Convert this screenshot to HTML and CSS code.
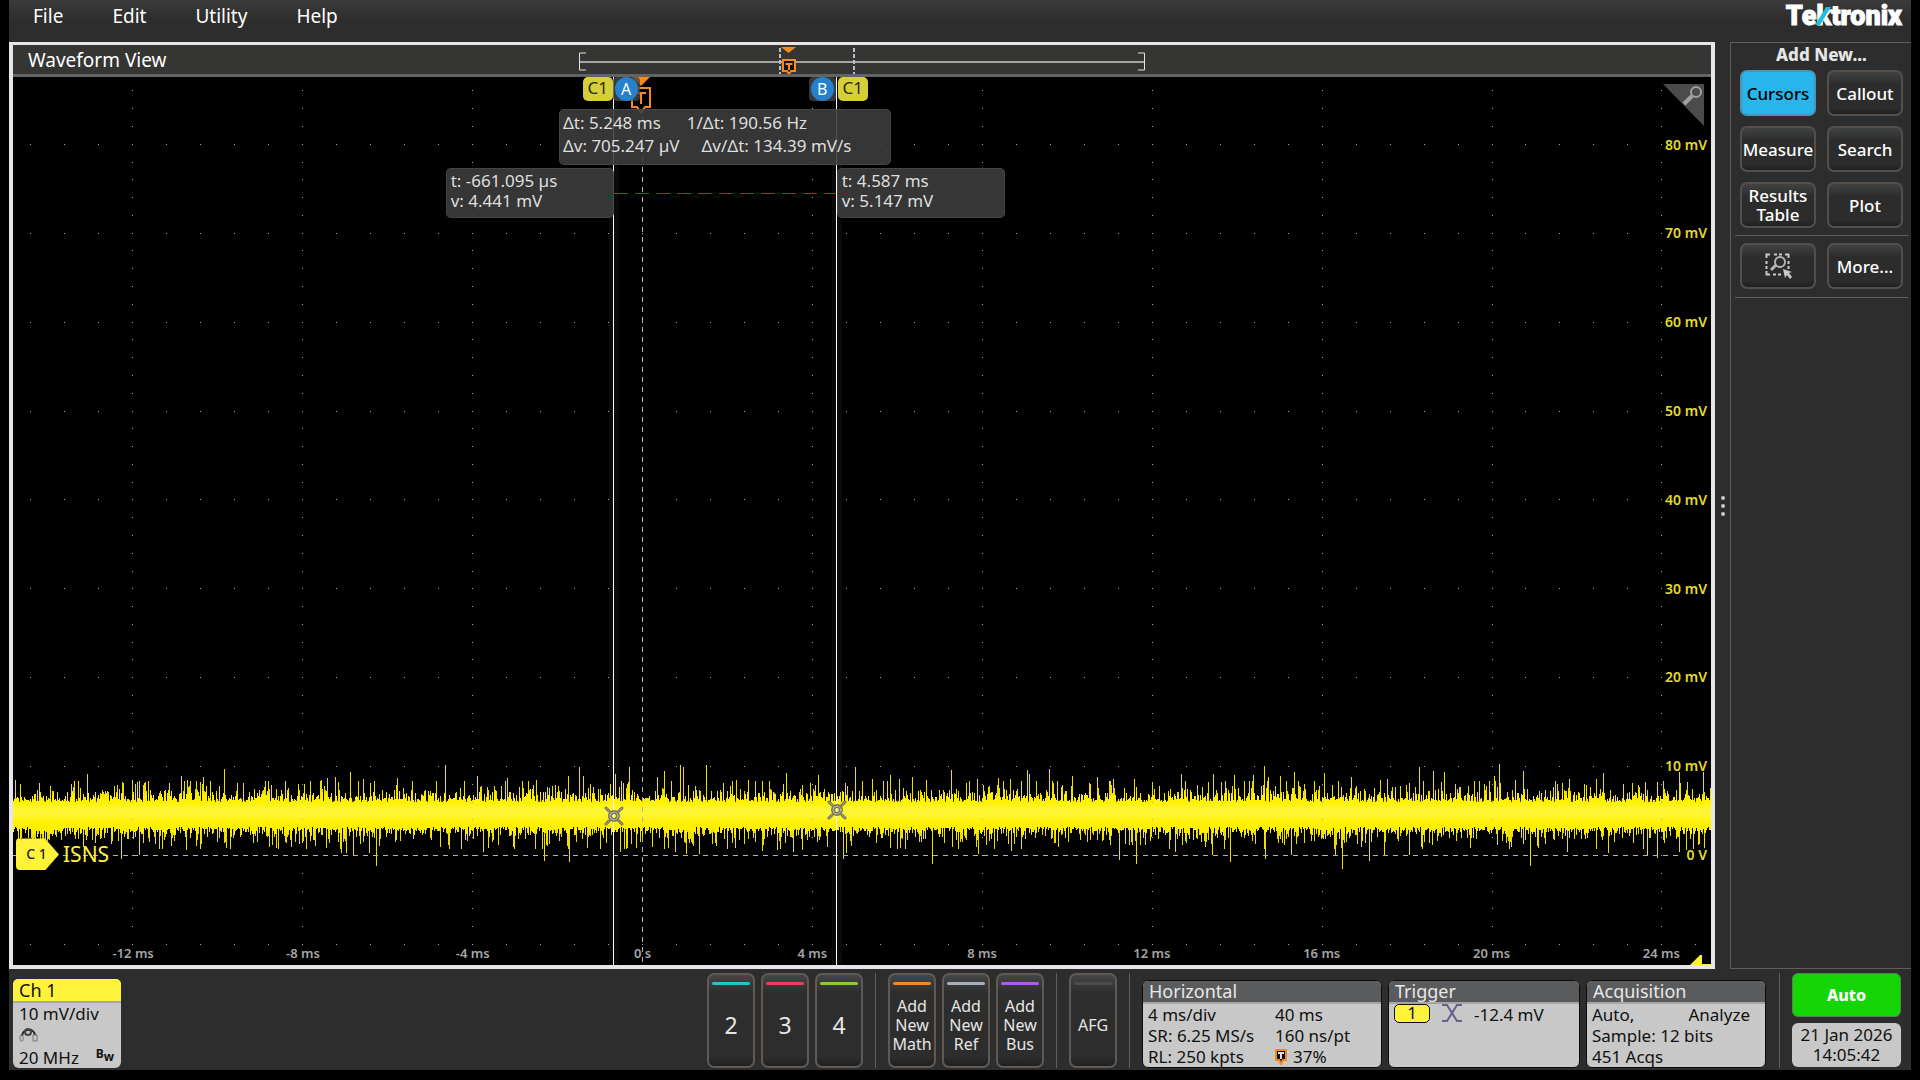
FILE: index.html
```html
<!DOCTYPE html>
<html lang="en">
<head>
<meta charset="utf-8">
<title>Waveform View</title>
<link rel="stylesheet" href="styles.css">
</head>
<body>
<div class="scope">
  <header class="topbar">
    <nav class="menu">
      <button type="button">File</button>
      <button type="button">Edit</button>
      <button type="button">Utility</button>
      <button type="button">Help</button>
    </nav>
    <div class="logo">Te<span class="logo-k">k<svg viewBox="0 0 16 18" aria-hidden="true"><path d="M0 18 11 0H16L5 18Z" fill="#1ebfe0"/></svg></span>tronix</div>
  </header>

  <main class="workspace">
    <section class="view">
      <div class="view-head">
        <h1>Waveform View</h1>
        <svg class="navigator" viewBox="0 0 568 29" aria-hidden="true">
          <path d="M8 8H1.500V25H8M560 8H566.500V25H560" fill="none" stroke="#e4e4e4"/>
          <path d="M2 17H566" stroke="#a4a4a2" stroke-width="2"/>
          <path d="M202 3V29M276 3V29" stroke="#bdbdbd" stroke-width="2" stroke-dasharray="4 2"/>
          <path d="M203 2H218L210.500 8Z" fill="#f68a1f"/>
          <path d="M205 15H217V26H213L211 29 209 26H205Z" fill="#111" stroke="#f68a1f" stroke-width="2"/>
          <path d="M207.500 19H214.500M211 19V25" stroke="#f68a1f" stroke-width="2"/>
        </svg>
      </div>
      <div class="plot">
        <svg class="trace" viewBox="0 0 1698 888" preserveAspectRatio="none" aria-hidden="true">
          <defs>
            <linearGradient id="core" x1="0" y1="0" x2="0" y2="1">
              <stop offset="0" stop-color="#fff200" stop-opacity="0"/>
              <stop offset=".35" stop-color="#fff633"/>
              <stop offset=".65" stop-color="#fff633"/>
              <stop offset="1" stop-color="#fff200" stop-opacity="0"/>
            </linearGradient>
          </defs>
          <path id="spikes" stroke="#eadf00" fill="none"/>
          <path id="band" stroke="#fff000" fill="none"/>
          <rect x="0" y="722" width="1698" height="26" fill="url(#core)"/>
          <path id="dots" fill="#a8a8a8"/>
          <path d="M0 778.500H1668" stroke="#b4b4b4" stroke-dasharray="5 5"/>
          <path d="M629.500 0V888" stroke="#b4b4b4" stroke-dasharray="5 5"/>
          <path d="M601 116.500H823" stroke="#e80c0c" stroke-dasharray="14 7"/>
        </svg>

        <svg class="trigger-mark" viewBox="0 0 20 37" aria-hidden="true">
          <path d="M1 0H19L10 9Z" fill="#f68a1f"/>
          <path d="M1 11H19V30H14L10 36 6 30H1Z" fill="#000" stroke="#f68a1f" stroke-width="2"/>
          <path d="M5 16H15M10 16V27" stroke="#f68a1f" stroke-width="2"/>
        </svg>

        <div class="cursor" style="--t:-0.68"></div>
        <div class="cursor" style="--t:4.575"></div>
        <div class="flags flags-a" style="--t:-0.68"><span class="src">C1</span><span class="knob"><b>A</b></span></div>
        <div class="flags flags-b" style="--t:4.575"><span class="knob"><b>B</b></span><span class="src">C1</span></div>

        <div class="readout delta">
          <p class="wide"><span>Δt: 5.248 ms</span><span>1/Δt: 190.56 Hz</span></p>
          <p><span>Δv: 705.247 µV</span><span>Δv/Δt: 134.39 mV/s</span></p>
        </div>
        <div class="readout point point-a" style="--t:-0.68"><p>t: -661.095 µs</p><p>v: 4.441 mV</p></div>
        <div class="readout point point-b" style="--t:4.575"><p>t: 4.587 ms</p><p>v: 5.147 mV</p></div>

        <svg class="target" style="--t:-0.68;--v:4.441" viewBox="0 0 20 20" aria-hidden="true"><g fill="none" stroke-linecap="round"><path d="M2 2 5 5M18 2 15 5M2 18 5 15M18 18 15 15" stroke="#77745a" stroke-width="3"/><circle cx="10" cy="10" r="4" stroke="#77745a" stroke-width="4"/><path d="M2 2 5 5M18 2 15 5M2 18 5 15M18 18 15 15" stroke="#aaa896"/><circle cx="10" cy="10" r="4" stroke="#c4c2b0" stroke-width="1"/></g></svg>
        <svg class="target" style="--t:4.575;--v:5.147" viewBox="0 0 20 20" aria-hidden="true"><g fill="none" stroke-linecap="round"><path d="M2 2 5 5M18 2 15 5M2 18 5 15M18 18 15 15" stroke="#77745a" stroke-width="3"/><circle cx="10" cy="10" r="4" stroke="#77745a" stroke-width="4"/><path d="M2 2 5 5M18 2 15 5M2 18 5 15M18 18 15 15" stroke="#aaa896"/><circle cx="10" cy="10" r="4" stroke="#c4c2b0" stroke-width="1"/></g></svg>

        <span class="volt" style="--v:80">80 mV</span>
        <span class="volt" style="--v:70">70 mV</span>
        <span class="volt" style="--v:60">60 mV</span>
        <span class="volt" style="--v:50">50 mV</span>
        <span class="volt" style="--v:40">40 mV</span>
        <span class="volt" style="--v:30">30 mV</span>
        <span class="volt" style="--v:20">20 mV</span>
        <span class="volt" style="--v:10">10 mV</span>
        <span class="volt" style="--v:0">0 V</span>

        <span class="time" style="--t:-12">-12 ms</span>
        <span class="time" style="--t:-8">-8 ms</span>
        <span class="time" style="--t:-4">-4 ms</span>
        <span class="time" style="--t:0">0 s</span>
        <span class="time" style="--t:4">4 ms</span>
        <span class="time" style="--t:8">8 ms</span>
        <span class="time" style="--t:12">12 ms</span>
        <span class="time" style="--t:16">16 ms</span>
        <span class="time" style="--t:20">20 ms</span>
        <span class="time" style="--t:24">24 ms</span>

        <div class="channel-tag" style="--v:0"><span class="handle">C 1</span><span class="name">ISNS</span></div>

        <svg class="zoom-corner" viewBox="0 0 42 42" aria-hidden="true">
          <path d="M0 0H41V42Z" fill="#4b4b4b"/>
          <circle cx="33" cy="8" r="5" fill="none" stroke="#a0a0a0" stroke-width="2"/>
          <path d="M29 12 21 20" stroke="#a0a0a0" stroke-width="4"/>
        </svg>
        <svg class="level-corner" viewBox="0 0 21 10" aria-hidden="true"><path d="M0 10 10 0H12V9H21V10Z" fill="#fff22d"/></svg>
      </div>
    </section>

    <div class="splitter"><i></i><i></i><i></i></div>

    <aside class="panel">
      <h2>Add New...</h2>
      <div class="tools">
        <button type="button" class="tool active">Cursors</button>
        <button type="button" class="tool">Callout</button>
        <button type="button" class="tool">Measure</button>
        <button type="button" class="tool">Search</button>
        <button type="button" class="tool">Results Table</button>
        <button type="button" class="tool">Plot</button>
      </div>
      <div class="tools more">
        <button type="button" class="tool" aria-label="Zoom area">
          <svg viewBox="0 0 27 26" width="27" height="26" aria-hidden="true">
            <path d="M1.500 5V1.500H5M20 1.500H23.500V5M1.500 18V21.500H5M9 1.500H12M14 1.500H17M1.500 8V11M1.500 13V16M23.500 8V11M23.500 13V16M8 21.500H11M13 21.500H16" fill="none" stroke="#c8c8c8" stroke-width="2"/>
            <circle cx="15" cy="9" r="5" fill="none" stroke="#b4b4b4" stroke-width="2"/>
            <path d="M11 12 6 17" stroke="#b4b4b4" stroke-width="3"/>
            <path d="M18 16 27 19 24 20 27 24 25 26 22 22 20 25Z" fill="#c8c8c8"/>
          </svg>
        </button>
        <button type="button" class="tool">More...</button>
      </div>
    </aside>
  </main>

  <footer class="settings">
    <button type="button" class="card channel">
      <span class="card-head">Ch 1</span>
      <span class="card-body">
        <span>10 mV/div</span>
        <svg viewBox="0 0 20 16" width="20" height="16" aria-hidden="true"><g fill="none"><path d="M3 9C4 1 15 1 16 8" stroke="#222" stroke-width="2"/><circle cx="9" cy="5" r="3" stroke="#444" stroke-width="2"/><rect x="1" y="8" width="3" height="6" rx="1" stroke="#777"/><rect x="14" y="8" width="4" height="6" stroke="#777"/></g></svg>
        <span class="bandwidth">20 MHz <b>B<sub>w</sub></b></span>
      </span>
    </button>

    <div class="adders">
      <button type="button" class="adder big cyan">2</button>
      <button type="button" class="adder big red">3</button>
      <button type="button" class="adder big green">4</button>
    </div>
    <div class="adders">
      <button type="button" class="adder orange">Add New Math</button>
      <button type="button" class="adder silver">Add New Ref</button>
      <button type="button" class="adder purple">Add New Bus</button>
    </div>
    <div class="adders">
      <button type="button" class="adder gray">AFG</button>
    </div>

    <div class="cards">
      <button type="button" class="card horizontal">
        <span class="card-head">Horizontal</span>
        <span class="card-body">
          <span>4 ms/div</span><span>40 ms</span>
          <span>SR: 6.25 MS/s</span><span>160 ns/pt</span>
          <span>RL: 250 kpts</span>
          <span class="position"><svg viewBox="0 0 12 16" width="12" height="16" aria-hidden="true"><path d="M1 1H11V11H8L6 15 4 11H1Z" fill="#111" stroke="#f68a1f" stroke-width="2"/><path d="M3 4H9M6 4V10" stroke="#ddd" stroke-width="2"/></svg>37%</span>
        </span>
      </button>
      <button type="button" class="card trigger">
        <span class="card-head">Trigger</span>
        <span class="card-body">
          <span class="source">1</span>
          <svg viewBox="0 0 20 18" width="20" height="18" aria-hidden="true"><path d="M0 1H5L15 17H20M0 17H5L15 1H20" fill="none" stroke="#66608f" stroke-width="2"/></svg>
          <span>-12.4 mV</span>
        </span>
      </button>
      <button type="button" class="card acquisition">
        <span class="card-head">Acquisition</span>
        <span class="card-body">
          <span class="mode"><span>Auto,</span><span>Analyze</span></span>
          <span>Sample: 12 bits</span>
          <span>451 Acqs</span>
        </span>
      </button>
    </div>

    <div class="status">
      <button type="button" class="run">Auto</button>
      <button type="button" class="clock">21 Jan 2026<br>14:05:42</button>
    </div>
  </footer>
</div>
<script src="trace.js"></script>
</body>
</html>
```
FILE: styles.css
```css
* { box-sizing: border-box; }

body {
  margin: 0;
  background: #000;
  color: #fff;
  font-family: "Noto Sans", "Open Sans", sans-serif;
  font-size: 17px;
}

h1, h2, p { margin: 0; }

button {
  margin: 0;
  padding: 0;
  border: 0;
  background: none;
  color: inherit;
  font: inherit;
}

.scope {
  display: grid;
  grid-template-rows: 42px 1fr 101px;
  height: calc(100vh - 10px);
  min-height: 560px;
  margin: 0 9px 10px;
  background: #2d2d2d;
}

/* Top bar */
.topbar {
  display: flex;
  justify-content: space-between;
  align-items: flex-start;
  padding: 0 9px 0 24px;
  background: linear-gradient(#3b3b3b, #2d2d2d 20px);
}
.menu {
  display: flex;
  gap: 49px;
  font-size: 19px;
  line-height: 32px;
}
.logo {
  font: 900 27px/32px Roboto, "Liberation Sans", sans-serif;
  -webkit-text-stroke: 1px #fff;
}
.logo-k { position: relative; }
.logo-k svg {
  position: absolute;
  left: -1px;
  bottom: 7px;
  width: 16px;
  height: 18px;
}

/* Workspace */
.workspace {
  display: flex;
  min-height: 0;
}
.view {
  flex: 1;
  display: flex;
  flex-direction: column;
  min-width: 0;
  border: 4px solid #e7e4ea;
  border-top-width: 3px;
}
.view-head {
  position: relative;
  display: flex;
  align-items: center;
  flex: none;
  height: 32px;
  padding-left: 15px;
  background: #353533;
  border-bottom: 3px solid #626464;
}
.view-head h1 {
  font-size: 19px;
  font-weight: 400;
}
.navigator {
  position: absolute;
  left: 33.300%;
  top: 0;
  width: 568px;
  height: 29px;
}
.plot {
  position: relative;
  flex: 1;
  overflow: hidden;
  background: #000;
}
.trace {
  position: absolute;
  inset: 0;
  width: 100%;
  height: 100%;
}

/* Items on the plot: --t is in ms over a 40 ms span, --v in mV over 100 mV */
.cursor, .flags, .point, .target, .time {
  position: absolute;
  left: calc((var(--t) + 14.83) * 2.5%);
}
.cursor {
  top: 0;
  bottom: 0;
  width: 10px;
  margin-left: -5px;
  background: linear-gradient(90deg, transparent 4px, #fff 4px 5px, transparent 5px) #ffffff0a;
}
.flags {
  display: flex;
  top: 0;
  height: 24px;
}
.flags-a { transform: translateX(-31px); }
.flags-b { transform: translateX(-28px); }
.src {
  width: 30px;
  height: 24px;
  border-radius: 5px;
  background: #d6cf3a;
  color: #2c2a10;
  line-height: 21px;
  text-align: center;
}
.knob {
  width: 27px;
  padding: 0 2px;
  border-radius: 4px;
  background: #464646cc;
}
.knob b {
  display: block;
  height: 24px;
  border-radius: 50%;
  background: #2581cb;
  font-size: 16px;
  font-weight: 400;
  line-height: 24px;
  text-align: center;
}
.flags-b .src { margin-left: 2px; }
.trigger-mark {
  position: absolute;
  left: 36.400%;
  top: 0;
  width: 20px;
  height: 37px;
}
.readout {
  position: absolute;
  border: 1px solid #4a4a4acc;
  border-radius: 5px;
  background: #3e3e3ee0;
  color: #dedede;
}
.delta {
  left: 32.150%;
  top: 32px;
  width: 332px;
  height: 56px;
  padding: 1px 3px;
  line-height: 23px;
}
.delta p {
  display: flex;
  gap: 22px;
}
.delta .wide { gap: 26px; }
.point {
  top: 91px;
  width: 168px;
  height: 50px;
  padding: 2px 4px;
  line-height: 20px;
}
.point-a { transform: translateX(-100%); }
.target {
  top: calc((87.65 - var(--v)) * 1%);
  width: 20px;
  height: 20px;
  margin: -10px 0 0 -10px;
}
.volt {
  position: absolute;
  right: 4px;
  top: calc((87.50 - var(--v)) * 1%);
  transform: translateY(-50%);
  color: #e3da2e;
  font-size: 14px;
  font-weight: 600;
}
.time {
  bottom: 3px;
  transform: translateX(-50%);
  color: #a5a5a5;
  font-size: 13px;
  font-weight: 600;
}
.channel-tag {
  position: absolute;
  left: 3px;
  top: calc((87.55 - var(--v)) * 1%);
  display: flex;
  align-items: center;
  gap: 4px;
  transform: translateY(-50%);
  color: #fff23a;
}
.handle {
  width: 43px;
  height: 32px;
  padding-right: 2px;
  border-radius: 4px 0 0 4px;
  background: #fff23a;
  clip-path: polygon(0 0, 29px 0, 100% 50%, 29px 100%, 0 100%);
  color: #222;
  font-size: 14px;
  font-weight: 500;
  line-height: 31px;
  text-align: center;
}
.name { font-size: 21px; }
.zoom-corner {
  position: absolute;
  top: 7px;
  right: 6px;
  width: 42px;
  height: 42px;
}
.level-corner {
  position: absolute;
  right: 0;
  bottom: 0;
  width: 21px;
  height: 10px;
}

.splitter {
  display: flex;
  flex: none;
  flex-direction: column;
  align-items: center;
  justify-content: center;
  gap: 4px;
  width: 15px;
}
.splitter i {
  width: 4px;
  height: 4px;
  border-radius: 50%;
  background: #c8c8c8;
}

/* Add New panel */
.panel {
  flex: none;
  width: 181px;
  padding: 0 3px 0 4px;
  border: solid #635e5b;
  border-width: 1px 0 1px 1px;
}
.panel h2 {
  color: #e6e6e6;
  font-size: 17px;
  font-weight: 800;
  line-height: 24px;
  text-align: center;
}
.tools {
  display: grid;
  grid-template-columns: 1fr 1fr;
  gap: 10px 11px;
  padding: 3px 5px 7px;
  border-bottom: 1px solid #635e5b;
}
.more { padding: 7px 5px 8px; }
.tool {
  display: grid;
  place-items: center;
  height: 46px;
  border: 2px solid #554f4c;
  border-radius: 7px;
  background: linear-gradient(#414343, #2c2c2c 12px, #2c2c2c 36px, #202020);
  font-weight: 500;
  line-height: 19px;
}
.tool.active {
  border-color: #4b93b4;
  background: #27b5ea;
  color: #000;
}

/* Bottom settings bar */
.settings {
  display: flex;
  align-items: flex-start;
  padding: 4px 10px 0 4px;
}
.card {
  display: flex;
  flex-direction: column;
  height: 88px;
  border: 1px solid #0c0c0c;
  border-radius: 6px;
  background: #c8c8c8;
  color: #111;
  text-align: left;
}
.card-head {
  flex: none;
  height: 23px;
  padding-left: 6px;
  border-bottom: 2px solid #a9a5a7;
  border-radius: 5px 5px 0 0;
  background: #5a5b5d;
  color: #e8e8e8;
  font-size: 18px;
  line-height: 20px;
}
.card-body {
  flex: 1;
  padding-left: 5px;
  line-height: 21px;
}
.channel {
  height: 89px;
  width: 108px;
  margin: 6px auto 0 0;
  border: 0;
}
.channel .card-head {
  height: 24px;
  background: #fff23a;
  color: #111;
  line-height: 22px;
}
.channel .card-body {
  display: flex;
  flex-direction: column;
  padding: 0 7px 0 6px;
}
.channel .card-body > span { line-height: 21px; }
.channel .card-body svg { margin: 3px 0 4px; }
.bandwidth {
  display: flex;
  justify-content: space-between;
}
.bandwidth b {
  font-size: 12px;
  line-height: 14px;
}
.bandwidth sub {
  font-size: 12px;
  vertical-align: -3px;
}

.adders {
  display: flex;
  gap: 6px;
  padding-right: 12px;
  margin-right: 12px;
  border-right: 1px solid #635e5b;
}
.adder {
  position: relative;
  width: 48px;
  height: 95px;
  padding: 10px 0 0;
  border: 2px solid #605954;
  border-radius: 7px;
  background: linear-gradient(#444646, #2d2d2d 18px, #2d2d2d 82px, #202020);
  color: #e6e6e6;
  font-size: 16px;
  line-height: 19px;
}
.adder::before {
  content: "";
  position: absolute;
  left: 3px;
  right: 3px;
  top: 7px;
  height: 3px;
  border-radius: 2px;
  background: var(--lamp);
}
.big { font-size: 23px; }
.cyan { --lamp: #1fc6cf; }
.red { --lamp: #e8405c; }
.green { --lamp: #8fcc2a; }
.orange { --lamp: #ee8a20; }
.silver { --lamp: #a9aebd; }
.purple { --lamp: #bb55f0; }
.gray { --lamp: #4c4c4c; }

.cards {
  display: flex;
  gap: 6px;
  padding: 7px 13px 0 0;
  margin-right: 12px;
  border-right: 1px solid #635e5b;
}
.horizontal { width: 240px; }
.horizontal .card-body {
  display: grid;
  grid-template-columns: 127px 1fr;
}
.position {
  display: flex;
  align-items: center;
  gap: 6px;
}
.trigger { width: 192px; }
.trigger .card-body {
  display: flex;
  align-items: flex-start;
  gap: 12px;
}
.source {
  width: 36px;
  height: 19px;
  border: 1px solid #111;
  border-radius: 5px;
  background: #fff23a;
  line-height: 16px;
  text-align: center;
}
.acquisition { width: 180px; }
.acquisition .card-body {
  display: flex;
  flex-direction: column;
}
.mode {
  display: flex;
  justify-content: space-between;
  padding-right: 15px;
}

.status {
  display: flex;
  flex-direction: column;
  gap: 6px;
  width: 109px;
}
.run, .clock {
  height: 44px;
  border-radius: 6px;
}
.run {
  border: 1px solid #4c8a4c;
  background: #15d504;
  font-size: 16px;
  font-weight: 800;
}
.clock {
  background: #c8c8c8;
  color: #111;
  line-height: 20px;
}
```
FILE: trace.js
```javascript
// Plot space is 1698 x 888 units: 42.45 units per ms, 8.89 units per mV.
const WIDTH = 1698;
const ZERO_X = 629;
const ZERO_Y = 778;

// Graticule dots
let dots = "";
const dot = (x, y) => { dots += `M${x} ${y}h1v1h-1z`; };
for (let d = -3; d <= 6; d++) {
  const x = Math.round(ZERO_X + d * 169.900);
  if (d !== 0) {
    for (let k = -5; k < 44; k++) dot(x, Math.round(ZERO_Y - k * 17.780));
  }
}
for (let r = -1; r <= 8; r++) {
  if (r === 0) continue;
  const y = Math.round(ZERO_Y - r * 88.900);
  for (let k = -18; k <= 31; k++) dot(Math.round(ZERO_X + k * 33.980), y);
}
document.getElementById("dots").setAttribute("d", dots);

// Largest excursions of the noise: column, height
const high = [2,703,7,707,74,697,61,704,58,707,119,703,104,708,109,705,156,706,168,699,174,703,190,700,211,692,230,706,272,704,297,704,308,703,314,701,322,700,337,695,350,702,357,706,384,701,432,688,464,699,494,701,523,703,555,699,566,690,570,699,602,697,616,690,644,700,651,694,667,688,670,690,693,688,723,703,735,703,773,696,805,698,842,690,859,702,877,698,886,702,899,700,913,703,899,700,938,693,964,702,985,701,997,702,1014,693,1016,697,1036,692,1059,699,1077,707,1084,700,1100,702,1121,702,1168,697,1200,697,1221,698,1240,698,1251,689,1255,700,1267,699,1281,695,1311,696,1338,700,1367,703,1374,702,1406,690,1420,694,1431,695,1466,704,1481,699,1486,687,1510,694,1502,703,1556,702,1590,696,1583,702,1610,707,1650,704,1666,695,1674,705,1690,695];
const low = [108,782,126,778,173,773,158,769,265,772,293,772,328,776,333,776,340,778,356,776,363,789,448,772,470,775,500,770,531,784,556,785,574,771,587,772,607,775,613,772,662,775,673,777,686,777,722,771,749,774,764,773,780,775,789,773,830,782,833,776,887,771,919,787,965,777,998,774,1106,783,1123,787,1162,775,1199,778,1217,785,1252,782,1278,778,1322,778,1329,792,1356,784,1371,778,1396,778,1498,770,1517,789,1554,775,1595,776,1634,778,1644,781,1666,775,1673,773,1691,771];

let seed = 20260121;
const random = () => (seed = (seed * 1664525 + 1013904223) % 4294967296) / 4294967296;
const tail = (scale) => -Math.log(1 - random() * 0.990) * scale;

const peaks = [], troughs = [];
for (let x = 0; x < WIDTH; x++) {
  let peak = 725 - tail(6);
  let trough = 750 + tail(6);
  if (random() < 0.050) peak -= random() * 18;
  if (random() < 0.050) trough += random() * 14;
  peaks[x] = Math.max(peak, 704);
  troughs[x] = Math.min(trough, 772);
}
for (let i = 0; i < high.length; i += 2) peaks[high[i]] = high[i + 1];
for (let i = 0; i < low.length; i += 2) troughs[low[i]] = low[i + 1];

let spikes = "", band = "";
for (let x = 0; x < WIDTH; x++) {
  spikes += `M${x + 0.5} ${Math.round(peaks[x])}V${Math.round(troughs[x])}`;
  const upper = Math.round(Math.max(peaks[x], 720 - random() * 6));
  const lower = Math.round(Math.min(troughs[x], 752 + random() * 6));
  band += `M${x + 0.5} ${upper}V${lower}`;
}
document.getElementById("spikes").setAttribute("d", spikes);
document.getElementById("band").setAttribute("d", band);
```
